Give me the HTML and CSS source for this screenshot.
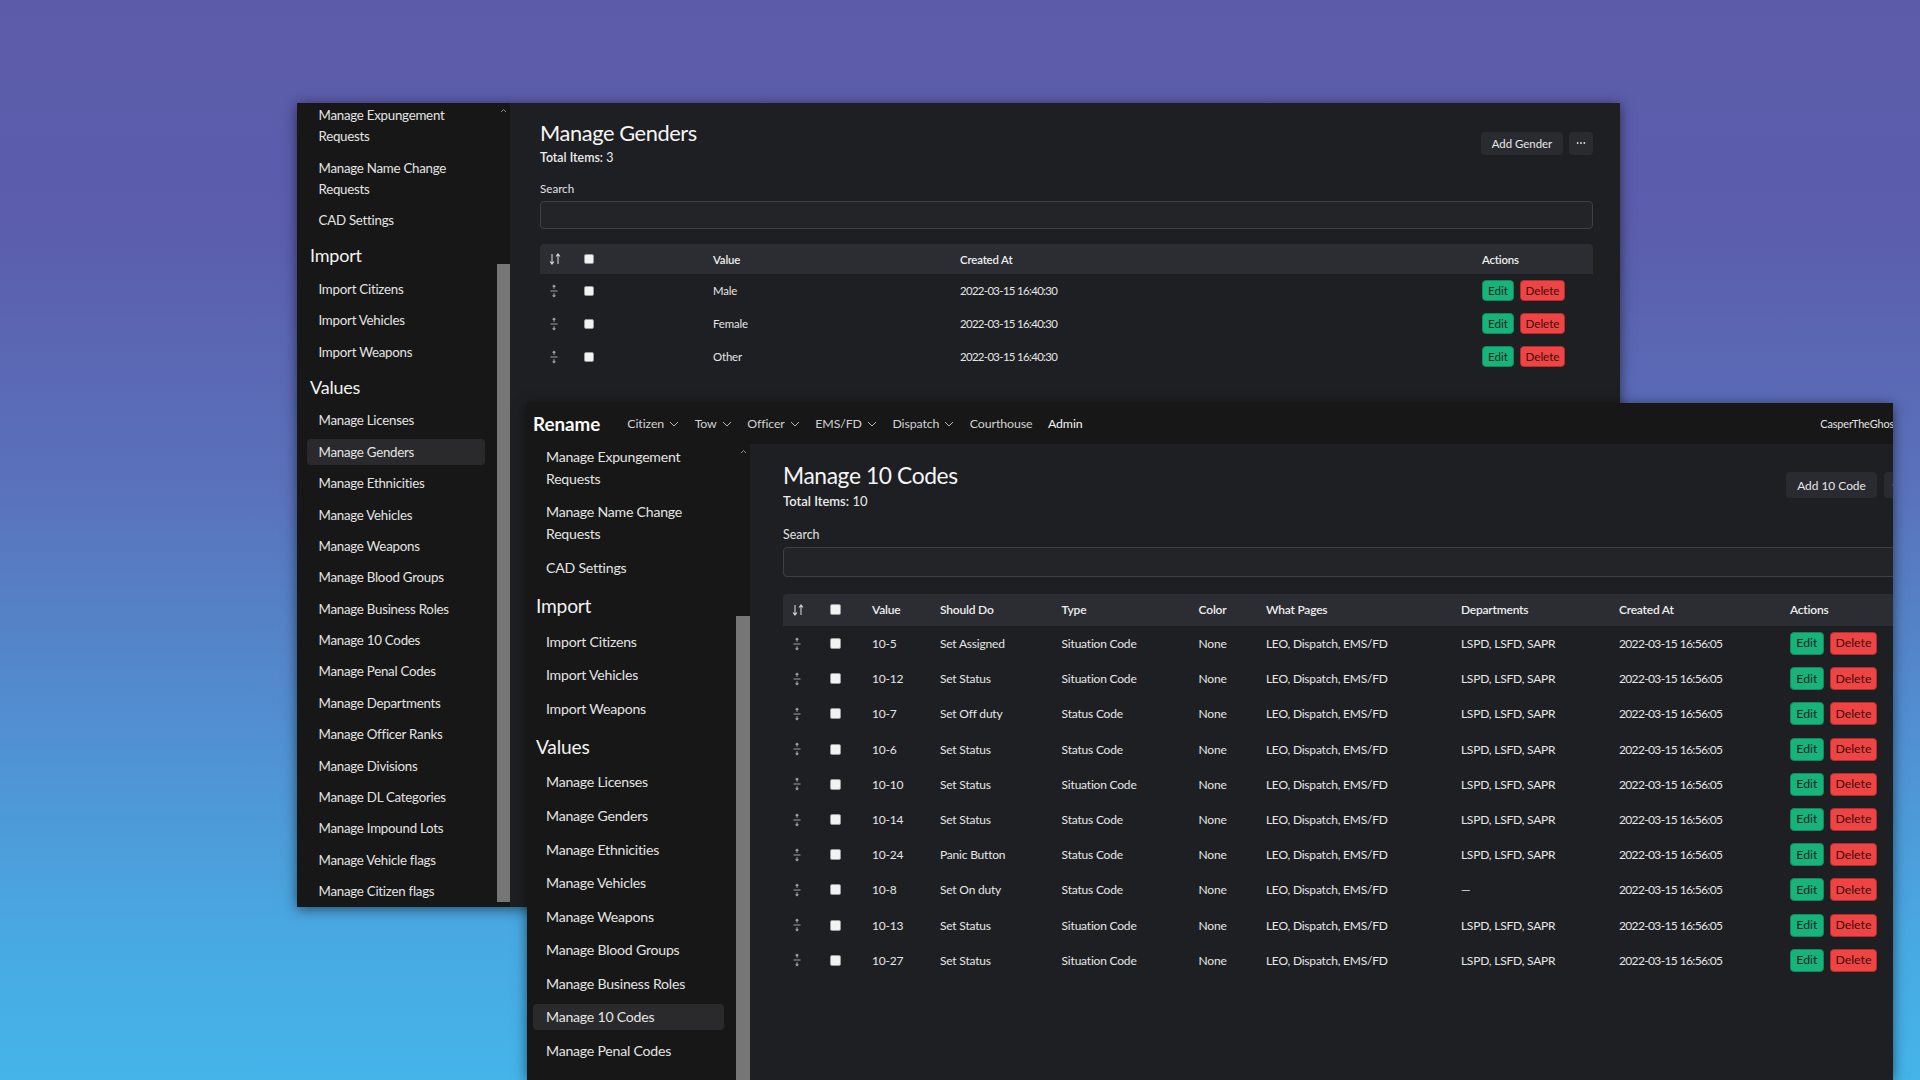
FILE: index.html
```html
<!DOCTYPE html>
<html lang="en">
<head>
<meta charset="utf-8">
<title>Manage Values</title>
<link rel="stylesheet" href="styles.css">
</head>
<body>
<section class="win win-back">
  <aside class="side side-back">
    <nav class="side-list">
      <a class="side-item">Manage Expungement Requests</a>
      <a class="side-item">Manage Name Change Requests</a>
      <a class="side-item">CAD Settings</a>
      <h3 class="side-head">Import</h3>
      <a class="side-item">Import Citizens</a>
      <a class="side-item">Import Vehicles</a>
      <a class="side-item">Import Weapons</a>
      <h3 class="side-head">Values</h3>
      <a class="side-item">Manage Licenses</a>
      <a class="side-item is-active">Manage Genders</a>
      <a class="side-item">Manage Ethnicities</a>
      <a class="side-item">Manage Vehicles</a>
      <a class="side-item">Manage Weapons</a>
      <a class="side-item">Manage Blood Groups</a>
      <a class="side-item">Manage Business Roles</a>
      <a class="side-item">Manage 10 Codes</a>
      <a class="side-item">Manage Penal Codes</a>
      <a class="side-item">Manage Departments</a>
      <a class="side-item">Manage Officer Ranks</a>
      <a class="side-item">Manage Divisions</a>
      <a class="side-item">Manage DL Categories</a>
      <a class="side-item">Manage Impound Lots</a>
      <a class="side-item">Manage Vehicle flags</a>
      <a class="side-item">Manage Citizen flags</a>
    </nav>
    <div class="sbar">
      <span class="sbar-up"><svg width="7" height="5" viewBox="0 0 7 5"><path d="M1 4 3.5 1.5 6 4" fill="none" stroke="currentColor" stroke-width="1"/></svg></span>
      <span class="sbar-thumb"></span>
    </div>
  </aside>
  <main class="main main-back">
    <div class="page-head">
      <div>
        <h1 class="page-title">Manage Genders</h1>
        <p class="total"><b>Total Items:</b> 3</p>
      </div>
      <div class="head-actions">
        <button class="btn btn-add">Add Gender</button>
        <button class="btn btn-more"><svg class="dots" viewBox="0 0 12 4"><circle cx="2" cy="2" r="1.1"/><circle cx="6" cy="2" r="1.1"/><circle cx="10" cy="2" r="1.1"/></svg></button>
      </div>
    </div>
    <label class="search-label">Search</label>
    <div class="search-input"></div>
    <div class="tbl tbl-genders">
      <div class="tr thead">
        <span class="cell"><svg class="ico-sort" viewBox="0 0 12 12"><path d="M3 1v10M1 8.5 3 11l2-2.5M9 11V1M7 3.5 9 1l2 2.5" fill="none" stroke="currentColor" stroke-width="1.1"/></svg></span>
        <span class="cell"><i class="cbox"></i></span>
        <span class="cell">Value</span>
        <span class="cell">Created At</span>
        <span class="cell">Actions</span>
      </div>
      <div class="tr">
        <span class="cell"><svg class="ico-drag" viewBox="0 0 10 14"><path d="M5 1.2v3.6M3.6 2.6 5 1.2l1.4 1.4M1.5 7h7M5 9.2v3.6M3.6 11.4 5 12.8l1.4-1.4" fill="none" stroke="currentColor" stroke-width="1.1"/></svg></span>
        <span class="cell"><i class="cbox"></i></span>
        <span class="cell">Male</span>
        <span class="cell date">2022-03-15 16:40:30</span>
        <span class="cell acts"><button class="btn-edit">Edit</button><button class="btn-del">Delete</button></span>
      </div>
      <div class="tr">
        <span class="cell"><svg class="ico-drag" viewBox="0 0 10 14"><path d="M5 1.2v3.6M3.6 2.6 5 1.2l1.4 1.4M1.5 7h7M5 9.2v3.6M3.6 11.4 5 12.8l1.4-1.4" fill="none" stroke="currentColor" stroke-width="1.1"/></svg></span>
        <span class="cell"><i class="cbox"></i></span>
        <span class="cell">Female</span>
        <span class="cell date">2022-03-15 16:40:30</span>
        <span class="cell acts"><button class="btn-edit">Edit</button><button class="btn-del">Delete</button></span>
      </div>
      <div class="tr">
        <span class="cell"><svg class="ico-drag" viewBox="0 0 10 14"><path d="M5 1.2v3.6M3.6 2.6 5 1.2l1.4 1.4M1.5 7h7M5 9.2v3.6M3.6 11.4 5 12.8l1.4-1.4" fill="none" stroke="currentColor" stroke-width="1.1"/></svg></span>
        <span class="cell"><i class="cbox"></i></span>
        <span class="cell">Other</span>
        <span class="cell date">2022-03-15 16:40:30</span>
        <span class="cell acts"><button class="btn-edit">Edit</button><button class="btn-del">Delete</button></span>
      </div>
    </div>
  </main>
</section>

<section class="win win-front">
  <div class="front-inner">
    <header class="topnav">
      <span class="brand">Rename</span>
      <nav class="nav-links">
        <span class="nav-link">Citizen<svg class="chev" viewBox="0 0 10 6"><path d="M1 1l4 4 4-4" fill="none" stroke="currentColor" stroke-width="1"/></svg></span>
        <span class="nav-link">Tow<svg class="chev" viewBox="0 0 10 6"><path d="M1 1l4 4 4-4" fill="none" stroke="currentColor" stroke-width="1"/></svg></span>
        <span class="nav-link">Officer<svg class="chev" viewBox="0 0 10 6"><path d="M1 1l4 4 4-4" fill="none" stroke="currentColor" stroke-width="1"/></svg></span>
        <span class="nav-link">EMS/FD<svg class="chev" viewBox="0 0 10 6"><path d="M1 1l4 4 4-4" fill="none" stroke="currentColor" stroke-width="1"/></svg></span>
        <span class="nav-link">Dispatch<svg class="chev" viewBox="0 0 10 6"><path d="M1 1l4 4 4-4" fill="none" stroke="currentColor" stroke-width="1"/></svg></span>
        <span class="nav-link">Courthouse</span>
        <span class="nav-link is-current">Admin</span>
      </nav>
      <span class="nav-user">CasperTheGhost</span>
    </header>
    <div class="win-body">
      <aside class="side side-front">
        <nav class="side-list">
          <a class="side-item">Manage Expungement Requests</a>
          <a class="side-item">Manage Name Change Requests</a>
          <a class="side-item">CAD Settings</a>
          <h3 class="side-head">Import</h3>
          <a class="side-item">Import Citizens</a>
          <a class="side-item">Import Vehicles</a>
          <a class="side-item">Import Weapons</a>
          <h3 class="side-head">Values</h3>
          <a class="side-item">Manage Licenses</a>
          <a class="side-item">Manage Genders</a>
          <a class="side-item">Manage Ethnicities</a>
          <a class="side-item">Manage Vehicles</a>
          <a class="side-item">Manage Weapons</a>
          <a class="side-item">Manage Blood Groups</a>
          <a class="side-item">Manage Business Roles</a>
          <a class="side-item is-active">Manage 10 Codes</a>
          <a class="side-item">Manage Penal Codes</a>
          <a class="side-item">Manage Departments</a>
          <a class="side-item">Manage Officer Ranks</a>
        </nav>
        <div class="sbar">
          <span class="sbar-up"><svg width="7" height="5" viewBox="0 0 7 5"><path d="M1 4 3.5 1.5 6 4" fill="none" stroke="currentColor" stroke-width="1"/></svg></span>
          <span class="sbar-thumb"></span>
        </div>
      </aside>
      <main class="main main-front">
        <div class="page-head">
          <div>
            <h1 class="page-title">Manage 10 Codes</h1>
            <p class="total"><b>Total Items:</b> 10</p>
          </div>
          <div class="head-actions">
            <button class="btn btn-add">Add 10 Code</button>
            <button class="btn btn-more"><svg class="dots" viewBox="0 0 12 4"><circle cx="2" cy="2" r="1.1"/><circle cx="6" cy="2" r="1.1"/><circle cx="10" cy="2" r="1.1"/></svg></button>
          </div>
        </div>
        <label class="search-label">Search</label>
        <div class="search-input"></div>
        <div class="tbl tbl-codes">
          <div class="tr thead">
            <span class="cell"><svg class="ico-sort" viewBox="0 0 12 12"><path d="M3 1v10M1 8.5 3 11l2-2.5M9 11V1M7 3.5 9 1l2 2.5" fill="none" stroke="currentColor" stroke-width="1.1"/></svg></span>
            <span class="cell"><i class="cbox"></i></span>
            <span class="cell">Value</span>
            <span class="cell">Should Do</span>
            <span class="cell">Type</span>
            <span class="cell">Color</span>
            <span class="cell">What Pages</span>
            <span class="cell">Departments</span>
            <span class="cell">Created At</span>
            <span class="cell">Actions</span>
          </div>
          <div class="tr"><span class="cell"><svg class="ico-drag" viewBox="0 0 10 14"><path d="M5 1.2v3.6M3.6 2.6 5 1.2l1.4 1.4M1.5 7h7M5 9.2v3.6M3.6 11.4 5 12.8l1.4-1.4" fill="none" stroke="currentColor" stroke-width="1.1"/></svg></span><span class="cell"><i class="cbox"></i></span><span class="cell">10-5</span><span class="cell">Set Assigned</span><span class="cell">Situation Code</span><span class="cell">None</span><span class="cell">LEO, Dispatch, EMS/FD</span><span class="cell">LSPD, LSFD, SAPR</span><span class="cell date">2022-03-15 16:56:05</span><span class="cell acts"><button class="btn-edit">Edit</button><button class="btn-del">Delete</button></span></div>
          <div class="tr"><span class="cell"><svg class="ico-drag" viewBox="0 0 10 14"><path d="M5 1.2v3.6M3.6 2.6 5 1.2l1.4 1.4M1.5 7h7M5 9.2v3.6M3.6 11.4 5 12.8l1.4-1.4" fill="none" stroke="currentColor" stroke-width="1.1"/></svg></span><span class="cell"><i class="cbox"></i></span><span class="cell">10-12</span><span class="cell">Set Status</span><span class="cell">Situation Code</span><span class="cell">None</span><span class="cell">LEO, Dispatch, EMS/FD</span><span class="cell">LSPD, LSFD, SAPR</span><span class="cell date">2022-03-15 16:56:05</span><span class="cell acts"><button class="btn-edit">Edit</button><button class="btn-del">Delete</button></span></div>
          <div class="tr"><span class="cell"><svg class="ico-drag" viewBox="0 0 10 14"><path d="M5 1.2v3.6M3.6 2.6 5 1.2l1.4 1.4M1.5 7h7M5 9.2v3.6M3.6 11.4 5 12.8l1.4-1.4" fill="none" stroke="currentColor" stroke-width="1.1"/></svg></span><span class="cell"><i class="cbox"></i></span><span class="cell">10-7</span><span class="cell">Set Off duty</span><span class="cell">Status Code</span><span class="cell">None</span><span class="cell">LEO, Dispatch, EMS/FD</span><span class="cell">LSPD, LSFD, SAPR</span><span class="cell date">2022-03-15 16:56:05</span><span class="cell acts"><button class="btn-edit">Edit</button><button class="btn-del">Delete</button></span></div>
          <div class="tr"><span class="cell"><svg class="ico-drag" viewBox="0 0 10 14"><path d="M5 1.2v3.6M3.6 2.6 5 1.2l1.4 1.4M1.5 7h7M5 9.2v3.6M3.6 11.4 5 12.8l1.4-1.4" fill="none" stroke="currentColor" stroke-width="1.1"/></svg></span><span class="cell"><i class="cbox"></i></span><span class="cell">10-6</span><span class="cell">Set Status</span><span class="cell">Status Code</span><span class="cell">None</span><span class="cell">LEO, Dispatch, EMS/FD</span><span class="cell">LSPD, LSFD, SAPR</span><span class="cell date">2022-03-15 16:56:05</span><span class="cell acts"><button class="btn-edit">Edit</button><button class="btn-del">Delete</button></span></div>
          <div class="tr"><span class="cell"><svg class="ico-drag" viewBox="0 0 10 14"><path d="M5 1.2v3.6M3.6 2.6 5 1.2l1.4 1.4M1.5 7h7M5 9.2v3.6M3.6 11.4 5 12.8l1.4-1.4" fill="none" stroke="currentColor" stroke-width="1.1"/></svg></span><span class="cell"><i class="cbox"></i></span><span class="cell">10-10</span><span class="cell">Set Status</span><span class="cell">Situation Code</span><span class="cell">None</span><span class="cell">LEO, Dispatch, EMS/FD</span><span class="cell">LSPD, LSFD, SAPR</span><span class="cell date">2022-03-15 16:56:05</span><span class="cell acts"><button class="btn-edit">Edit</button><button class="btn-del">Delete</button></span></div>
          <div class="tr"><span class="cell"><svg class="ico-drag" viewBox="0 0 10 14"><path d="M5 1.2v3.6M3.6 2.6 5 1.2l1.4 1.4M1.5 7h7M5 9.2v3.6M3.6 11.4 5 12.8l1.4-1.4" fill="none" stroke="currentColor" stroke-width="1.1"/></svg></span><span class="cell"><i class="cbox"></i></span><span class="cell">10-14</span><span class="cell">Set Status</span><span class="cell">Status Code</span><span class="cell">None</span><span class="cell">LEO, Dispatch, EMS/FD</span><span class="cell">LSPD, LSFD, SAPR</span><span class="cell date">2022-03-15 16:56:05</span><span class="cell acts"><button class="btn-edit">Edit</button><button class="btn-del">Delete</button></span></div>
          <div class="tr"><span class="cell"><svg class="ico-drag" viewBox="0 0 10 14"><path d="M5 1.2v3.6M3.6 2.6 5 1.2l1.4 1.4M1.5 7h7M5 9.2v3.6M3.6 11.4 5 12.8l1.4-1.4" fill="none" stroke="currentColor" stroke-width="1.1"/></svg></span><span class="cell"><i class="cbox"></i></span><span class="cell">10-24</span><span class="cell">Panic Button</span><span class="cell">Status Code</span><span class="cell">None</span><span class="cell">LEO, Dispatch, EMS/FD</span><span class="cell">LSPD, LSFD, SAPR</span><span class="cell date">2022-03-15 16:56:05</span><span class="cell acts"><button class="btn-edit">Edit</button><button class="btn-del">Delete</button></span></div>
          <div class="tr"><span class="cell"><svg class="ico-drag" viewBox="0 0 10 14"><path d="M5 1.2v3.6M3.6 2.6 5 1.2l1.4 1.4M1.5 7h7M5 9.2v3.6M3.6 11.4 5 12.8l1.4-1.4" fill="none" stroke="currentColor" stroke-width="1.1"/></svg></span><span class="cell"><i class="cbox"></i></span><span class="cell">10-8</span><span class="cell">Set On duty</span><span class="cell">Status Code</span><span class="cell">None</span><span class="cell">LEO, Dispatch, EMS/FD</span><span class="cell">—</span><span class="cell date">2022-03-15 16:56:05</span><span class="cell acts"><button class="btn-edit">Edit</button><button class="btn-del">Delete</button></span></div>
          <div class="tr"><span class="cell"><svg class="ico-drag" viewBox="0 0 10 14"><path d="M5 1.2v3.6M3.6 2.6 5 1.2l1.4 1.4M1.5 7h7M5 9.2v3.6M3.6 11.4 5 12.8l1.4-1.4" fill="none" stroke="currentColor" stroke-width="1.1"/></svg></span><span class="cell"><i class="cbox"></i></span><span class="cell">10-13</span><span class="cell">Set Status</span><span class="cell">Situation Code</span><span class="cell">None</span><span class="cell">LEO, Dispatch, EMS/FD</span><span class="cell">LSPD, LSFD, SAPR</span><span class="cell date">2022-03-15 16:56:05</span><span class="cell acts"><button class="btn-edit">Edit</button><button class="btn-del">Delete</button></span></div>
          <div class="tr"><span class="cell"><svg class="ico-drag" viewBox="0 0 10 14"><path d="M5 1.2v3.6M3.6 2.6 5 1.2l1.4 1.4M1.5 7h7M5 9.2v3.6M3.6 11.4 5 12.8l1.4-1.4" fill="none" stroke="currentColor" stroke-width="1.1"/></svg></span><span class="cell"><i class="cbox"></i></span><span class="cell">10-27</span><span class="cell">Set Status</span><span class="cell">Situation Code</span><span class="cell">None</span><span class="cell">LEO, Dispatch, EMS/FD</span><span class="cell">LSPD, LSFD, SAPR</span><span class="cell date">2022-03-15 16:56:05</span><span class="cell acts"><button class="btn-edit">Edit</button><button class="btn-del">Delete</button></span></div>
        </div>
      </main>
    </div>
  </div>
</section>
</body>
</html>
```
FILE: styles.css
```css
* { box-sizing: border-box; margin: 0; padding: 0; }
html, body { width: 1920px; height: 1080px; overflow: hidden; }
body {
  position: relative;
  font-family: Lato, "Noto Sans", sans-serif;
  color: #e6e6e6;
  background: linear-gradient(180deg, #5c5ba9 0%, #5b5ead 22%, #5a72bb 45%, #5190d2 68%, #48aae3 88%, #44b4e9 100%);
}
button { font-family: inherit; cursor: default; }

/* windows on the desktop */
.win { position: absolute; display: flex; overflow: hidden; box-shadow: 0 2px 12px rgba(0,0,0,.55); }
.win-back { left: 297px; top: 103px; width: 1323px; height: 804px; }
.win-front { left: 527px; top: 403px; width: 1366px; height: 677px; }
.front-inner { width: 1420px; flex: none; display: flex; flex-direction: column; height: 100%; }
.win-body { flex: 1; display: flex; min-height: 0; }

/* top navigation */
.topnav { height: 41px; flex: none; display: flex; align-items: center; background: #171718; padding: 0 49px 0 6px; }
.brand { font-weight: 700; font-size: 18.8px; color: #fafafa; }
.nav-links { display: flex; align-items: center; gap: 15.5px; margin-left: 27px; }
.nav-link { display: flex; align-items: center; font-size: 12.35px; letter-spacing: -0.1px; color: #d2d2d2; }
.nav-link.is-current { color: #f4f4f4; }
.chev { width: 10px; height: 6px; margin-left: 5px; color: #b5b5b5; }
.nav-user { margin-left: auto; font-size: 10.9px; letter-spacing: -0.1px; color: #e2e2e2; }

/* sidebar */
.side { display: flex; flex: none; background: #171717; }
.side-back { width: 213px; }
.side-front { width: 223px; }
.side-list { flex: 1; min-width: 0; display: flex; flex-direction: column; }
.side-back .side-list { margin-top: -3px; padding: 0 12px 0 10px; }
.side-front .side-list { margin-top: -4px; padding: 0 12.4px 0 5.6px; }
.side-item { display: block; color: #e4e4e4; border-radius: 4px; }
.side-back .side-item { font-size: 13.3px; letter-spacing: -0.25px; line-height: 21px; padding: 2.5px 8px 2.5px 11.5px; margin: 2.7px 0; }
.side-front .side-item { font-size: 14.1px; letter-spacing: -0.22px; line-height: 22px; padding: 2px 8px 2px 13.4px; margin: 3.8px 0; }
.side-item.is-active { background: #2a2a2c; }
.side-head { font-weight: 400; color: #f2f2f2; }
.side-back .side-head { font-size: 18px; letter-spacing: -0.2px; line-height: 26px; padding: 6.25px 0 5.25px 3px; }
.side-front .side-head { font-size: 19.2px; letter-spacing: -0.2px; line-height: 28px; padding: 7.2px 0 4.8px 3.4px; }

.sbar { flex: none; display: flex; flex-direction: column; align-items: stretch; }
.side-back .sbar { width: 13px; }
.side-front .sbar { width: 14px; }
.sbar-up { height: 14px; display: flex; justify-content: center; align-items: center; color: #8a8a8a; }
.sbar-thumb { display: block; background: #767676; }
.side-back .sbar-thumb { margin-top: 147px; height: 638px; }
.side-front .sbar-thumb { margin-top: 158px; flex: 1; }

/* main content */
.main { flex: 1; min-width: 0; background: #1e1f22; }
.main-back { padding: 16px 27px 0 30px; }
.main-front { padding: 16px 37px 0 33px; }
.page-head { display: flex; align-items: center; justify-content: space-between; }
.page-title { font-weight: 400; color: #f5f5f5; }
.main-back .page-title { font-size: 21.8px; letter-spacing: -0.4px; line-height: 28px; }
.main-front .page-title { font-size: 22.8px; letter-spacing: -0.4px; line-height: 30px; }
.total { color: #ececec; }
.total b { font-weight: 600; }
.main-back .total { font-size: 12.4px; line-height: 18px; margin-top: 2px; }
.main-front .total { font-size: 13px; line-height: 19px; margin-top: 1.5px; }
.head-actions { display: flex; }
.btn { display: flex; align-items: center; justify-content: center; background: #2a2b30; color: #e8e8e8; border: 0; border-radius: 4px; }
.dots { width: 10px; height: 4px; fill: #e0e0e0; }
.main-back .head-actions { gap: 6px; }
.main-back .btn { height: 23px; font-size: 11.4px; }
.main-back .btn-add { width: 82px; }
.main-back .btn-more { width: 24px; }
.main-front .head-actions { gap: 7px; }
.main-front .btn { height: 26px; font-size: 11.9px; }
.main-front .btn-add { width: 91px; }
.main-front .btn-more { width: 26px; }

.search-label { display: block; color: #e2e2e2; }
.main-back .search-label { font-size: 11.6px; line-height: 16px; margin-top: 14px; }
.main-front .search-label { font-size: 12.4px; line-height: 17px; margin-top: 15.5px; }
.search-input { background: #232428; border: 1px solid #3c3f47; border-radius: 4px; }
.main-back .search-input { height: 28px; margin-top: 4px; }
.main-front .search-input { height: 30px; margin-top: 3.7px; }

/* tables */
.tr { display: grid; align-items: center; }
.thead { background: #2c2d32; border-radius: 4px 4px 0 0; font-weight: 600; color: #ededed; }
.cell { display: flex; align-items: center; padding-left: 8px; white-space: nowrap; }
.cell:first-child { padding-left: 9px; }
.ico-sort { width: 12px; height: 12px; color: #cfcfcf; }
.ico-drag { width: 10px; height: 14px; color: #a2a2a2; }
.cbox { display: block; background: #f2f2f2; border: 1px solid #9a9a9a; border-radius: 2px; }
.acts { gap: 6px; letter-spacing: 0; }
.btn-edit, .btn-del { border-radius: 4px; line-height: 1; }
.btn-edit { background: #18b27b; color: #14281f; border: 1px solid #0f8a5e; }
.btn-del { background: #ef4444; color: #3e0b0b; border: 1px solid #b92c2c; }

.main-back .tbl { margin-top: 15px; font-size: 11.4px; letter-spacing: -0.15px; }
.tbl-genders .tr { grid-template-columns: 32px 133px 247px 522px 119px; height: 33px; }
.tbl-genders .thead { height: 30px; }
.tbl-genders .cell:nth-child(2) { padding-left: 12px; }
.tbl-genders .cbox { width: 10px; height: 10px; }
.tbl-genders .date { letter-spacing: -0.65px; }
.tbl-genders .btn-edit { width: 32px; height: 21px; font-size: 11.6px; }
.tbl-genders .btn-del { width: 45px; height: 21px; font-size: 11.6px; }

.main-front .tbl { margin-top: 17.3px; font-size: 12px; letter-spacing: -0.2px; }
.tbl-codes .tr { grid-template-columns: 43px 38px 68px 121.6px 137px 67.3px 195px 158px 171px 128px; height: 35.2px; }
.tbl-codes .thead { height: 32px; }
.tbl-codes .cell:nth-child(2) { padding-left: 4px; }
.tbl-codes .cbox { width: 11px; height: 11px; }
.tbl-codes .date { letter-spacing: -0.63px; }
.tbl-codes .btn-edit { width: 34px; height: 23px; font-size: 12.3px; }
.tbl-codes .btn-del { width: 47px; height: 23px; font-size: 12.3px; }
```
